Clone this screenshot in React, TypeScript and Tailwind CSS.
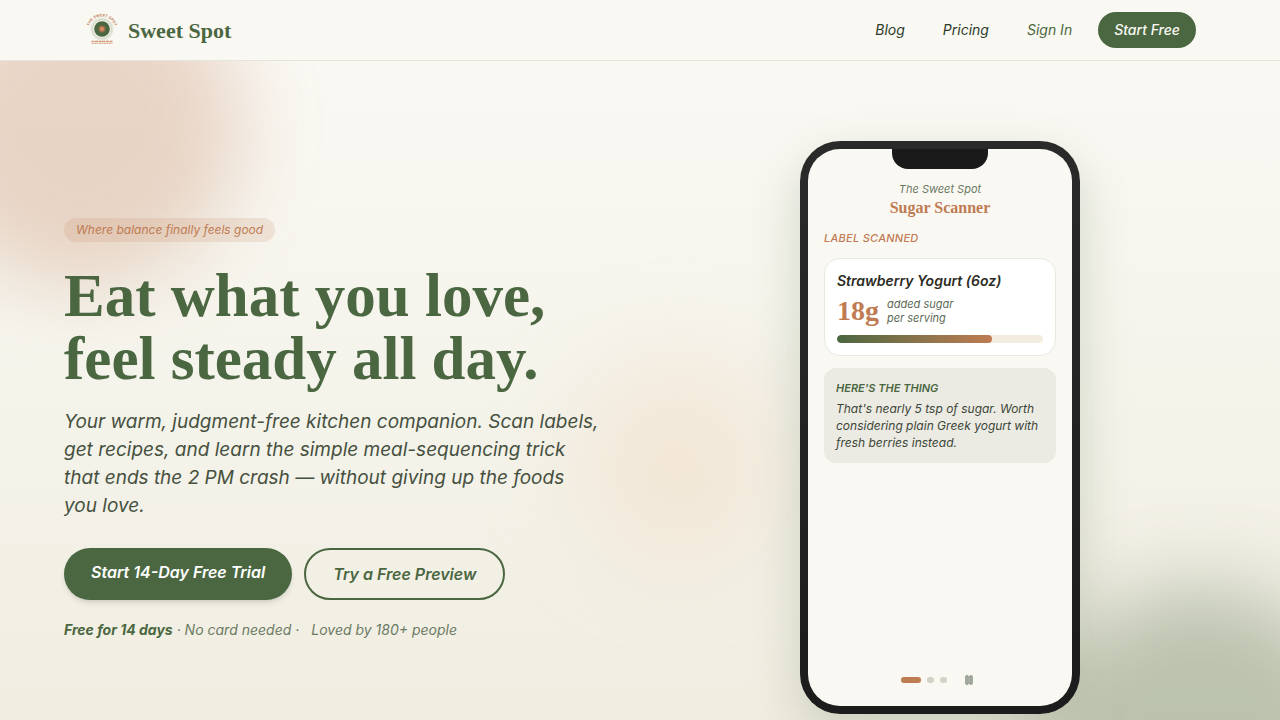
import type { ReactNode } from 'react';

const navLinks = [
  { label: 'Blog', href: '#blog', className: 'text-[#2c3a28]' },
  { label: 'Pricing', href: '#pricing', className: 'text-[#2c3a28]' },
  { label: 'Sign In', href: '#sign-in', className: 'text-[#4a6741]' },
];

const slides = ['Sugar Scanner', 'Recipes', 'Meal sequencing'];

function Logo() {
  return (
    <svg viewBox="0 0 36 36" className="h-9 w-9" aria-hidden="true">
      <defs>
        <path id="logo-arc" d="M5 17 A13 12.5 0 0 1 31 17" />
      </defs>
      <text fontSize="3.8" fontWeight="700" fill="#bf7b52" fontFamily="Liberation Sans, sans-serif" textAnchor="middle">
        <textPath href="#logo-arc" startOffset="50%">
          THE SWEET SPOT
        </textPath>
      </text>
      <circle cx="18" cy="17" r="11.5" fill="#e6e7db" />
      <circle cx="18" cy="17" r="9.5" fill="#f1f0e6" stroke="#c9cfbf" strokeWidth="0.8" />
      <circle cx="18" cy="17" r="7.8" fill="#4a6741" />
      <circle cx="18" cy="17" r="3.4" fill="#9c6f4b" />
      <circle cx="18" cy="17" r="2" fill="#d98a62" />
      <path d="M7.5 29.5H28.5" stroke="#cf9673" strokeWidth="1.4" strokeDasharray="3 0.6" />
      <path d="M7.5 31.5H28.5" stroke="#dcb096" strokeWidth="1" strokeDasharray="2 0.5" />
    </svg>
  );
}

function Header() {
  return (
    <header className="relative z-10 border-b border-[#e4e5dd] bg-[#faf8f3]">
      <div className="mx-auto flex h-15 max-w-[1160px] items-center justify-between px-6">
        <a href="#home" className="flex items-center gap-2">
          <Logo />
          <span className="font-['Liberation_Serif',serif] text-[22px] font-bold text-[#4a6741]">Sweet Spot</span>
        </a>
        <nav className="flex items-center gap-[38px] text-sm italic">
          {navLinks.map((link) => (
            <a key={link.label} href={link.href} className={link.className}>
              {link.label}
            </a>
          ))}
          <a
            href="#start"
            className="-ml-3 flex h-9 items-center rounded-full bg-[#4a6741] px-4 font-medium text-[#faf8f3]"
          >
            Start Free
          </a>
        </nav>
      </div>
    </header>
  );
}

function PhoneFrame({ children }: { children: ReactNode }) {
  return (
    <div className="h-[573px] w-[280px] rounded-[40px] bg-linear-to-b from-[#2a2a2a] to-[#1c1c1c] p-2 shadow-[0_20px_50px_rgba(74,103,65,0.22)]">
      <div className="flex h-full flex-col rounded-[32px] bg-[#faf8f3] px-4">
        <div className="mx-auto h-5 w-24 rounded-b-2xl bg-[#1a1a1a]" />
        {children}
      </div>
    </div>
  );
}

function ScannerScreen() {
  return (
    <>
      <div className="pt-3 text-center">
        <p className="text-[11px] leading-4 italic text-[#6b7a64]">The Sweet Spot</p>
        <h2 className="font-['Liberation_Serif',serif] text-base leading-[22px] font-bold text-[#bf7b52]">
          Sugar Scanner
        </h2>
      </div>
      <p className="mt-[11px] text-[11px] leading-4 font-medium tracking-wide italic text-[#bf7b52] uppercase">
        Label scanned
      </p>

      <div className="mt-3 h-[98px] rounded-2xl border border-[#ebe9df] bg-white p-3">
        <p className="text-sm leading-5 font-semibold italic text-[#2c2c24]">Strawberry Yogurt (6oz)</p>
        <div className="mt-1 flex items-center gap-2">
          <span className="font-['Liberation_Serif',serif] text-[28px] leading-8 font-bold text-[#bf7b52]">18g</span>
          <span className="text-[11px] leading-[14px] italic text-[#5d6a57]">
            added sugar
            <br />
            per serving
          </span>
        </div>
        <div className="mt-2 h-2 overflow-hidden rounded-full bg-[#f2ede0]">
          <div className="h-full w-3/4 rounded-full bg-linear-to-r from-[#4a6741] to-[#bf7b52]" />
        </div>
      </div>

      <div className="mt-3 rounded-xl bg-[#ebeae3] p-3">
        <p className="text-[11px] leading-4 font-semibold italic text-[#4a6741] uppercase">Here's the thing</p>
        <p className="mt-1 text-xs leading-[17px] italic text-[#3c4638]">
          That's nearly 5 tsp of sugar. Worth considering plain Greek yogurt with fresh berries instead.
        </p>
      </div>

      <div className="mt-auto mb-4 flex h-5 items-center justify-center gap-[6px]">
        {slides.map((slide, index) => (
          <button
            key={slide}
            type="button"
            aria-label={slide}
            className={index === 0 ? 'h-[6px] w-5 rounded-full bg-[#bf7b52]' : 'h-[6px] w-[7px] rounded-full bg-[#d1d3c5]'}
          />
        ))}
        <button type="button" aria-label="Pause" className="ml-[6px] flex h-5 w-5 items-center justify-center">
          <svg viewBox="0 0 8 10" className="h-[10px] w-2">
            <rect x="0" y="1" width="8" height="8" fill="#b3b7ad" />
            <path d="M1 0.5h2v9H1zM5 0.5h2v9H5z" fill="#a9aea3" stroke="#8d9587" strokeWidth="0.6" />
          </svg>
        </button>
      </div>
    </>
  );
}

function Hero() {
  return (
    <section className="relative overflow-hidden bg-linear-to-b from-[#faf8f3] via-[#f4f3ea] to-[#f0ebde]">
      {/* Soft colour blobs behind the content */}
      <div className="absolute -top-24 -left-20 h-80 w-80 rounded-full bg-[#bf7b52]/28 blur-[40px]" />
      <div className="absolute -right-20 -bottom-28 h-80 w-80 rounded-full bg-[#4a6741]/32 blur-[40px]" />
      <div className="absolute top-[296px] left-[578px] h-50 w-50 rounded-full bg-[#f0c8a8]/28 blur-[48px]" />

      <div className="relative mx-auto grid max-w-6xl grid-cols-2 items-center gap-12 py-20">
        <div>
          <p className="inline-block rounded-full bg-[#bf7b52]/15 px-3 text-xs leading-6 italic text-[#bf7b52]">
            Where balance finally feels good
          </p>
          <h1 className="mt-[22px] font-['Liberation_Serif',serif] text-[61px] leading-[63px] font-bold text-[#4a6741]">
            Eat what you love,
            <br />
            feel steady all day.
          </h1>
          <p className="mt-[18px] max-w-[540px] text-[19px] leading-7 italic text-[#46503f]">
            Your warm, judgment-free kitchen companion. Scan labels, get recipes, and learn the simple meal-sequencing
            trick that ends the 2 PM crash — without giving up the foods you&nbsp;love.
          </p>
          <div className="mt-7 flex gap-3">
            <a
              href="#trial"
              className="h-13 rounded-full bg-[#4a6741] px-[27px] text-base leading-12 font-semibold italic text-white shadow-md"
            >
              Start 14-Day Free Trial
            </a>
            <a
              href="#preview"
              className="h-13 rounded-full border-2 border-[#4a6741] px-[27px] text-base leading-12 font-semibold italic text-[#4a6741]"
            >
              Try a Free Preview
            </a>
          </div>
          <p className="mt-5 flex gap-3 text-sm italic text-[#6b7a64]">
            <span>
              <strong className="font-bold text-[#4a6741]">Free for 14 days</strong> · No card needed ·
            </span>
            <span>Loved by 180+ people</span>
          </p>
        </div>

        <div className="flex justify-center">
          <PhoneFrame>
            <ScannerScreen />
          </PhoneFrame>
        </div>
      </div>
    </section>
  );
}

export default function App() {
  return (
    <div className="min-h-screen bg-[#faf8f3] font-['Inter',sans-serif]">
      <Header />
      <main>
        <Hero />
      </main>
    </div>
  );
}
